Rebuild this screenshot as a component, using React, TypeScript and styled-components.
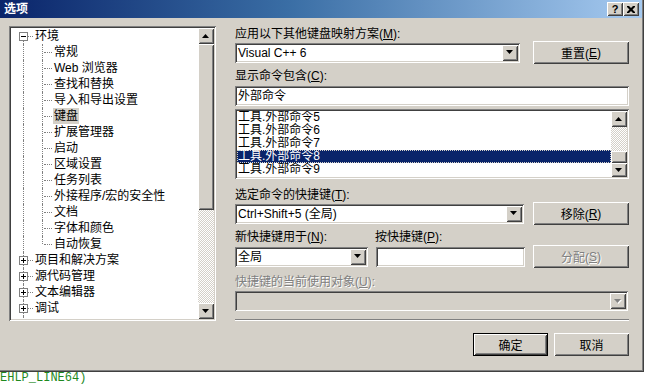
import React from 'react';
import styled, { createGlobalStyle, css } from 'styled-components';

const FACE = '#d4d0c8';
const FONT = `Tahoma, "Liberation Sans", "Noto Sans CJK SC", sans-serif`;

const Global = createGlobalStyle`
  html, body { margin: 0; padding: 0; background: #fff; }
  body { font-family: ${FONT}; font-size: 12px; color: #000; }
`;

const sunken = css`
  box-shadow: inset 1px 1px #808080, inset -1px -1px #fff, inset 2px 2px #404040,
    inset -2px -2px ${FACE};
`;
const raised = css`
  box-shadow: inset 1px 1px #fff, inset -1px -1px #404040, inset 2px 2px ${FACE},
    inset -2px -2px #808080;
`;

const Window = styled.div`
  width: 644px;
  height: 372px;
  box-sizing: border-box;
  padding: 0 2px 2px 0;
  background: ${FACE};
  box-shadow: inset -1px -1px #404040, inset -2px -2px #808080;
  display: flex;
  flex-direction: column;
`;

const TitleBar = styled.div`
  height: 18px;
  flex: none;
  display: flex;
  align-items: center;
  background: linear-gradient(to right, #0a246a 0%, #3a6ea5 45%, #a6caf0 100%);
  padding: 0 3px 0 4px;
`;

const Title = styled.div`
  flex: 1;
  color: #fff;
  font-weight: bold;
  font-size: 12px;
  line-height: 18px;
`;

const CapButton = styled.div`
  width: 16px;
  height: 14px;
  background: ${FACE};
  ${raised};
  display: flex;
  align-items: center;
  justify-content: center;
  font-family: Tahoma, "Liberation Sans", sans-serif;
  font-weight: bold;
  font-size: 11px;
  line-height: 14px;
`;

const Body = styled.div`
  flex: 1;
  display: flex;
  align-items: flex-start;
  padding: 8px 0 0 9px;
`;

/* ---------- tree ---------- */
const TreeBox = styled.div`
  width: 207px;
  height: 295px;
  box-sizing: border-box;
  padding: 2px;
  background: #fff;
  ${sunken};
  display: flex;
  flex: none;
`;

const TreeList = styled.div`
  flex: 1;
  overflow: hidden;
  padding-left: 4px;
`;

const TreeRow = styled.div`
  display: flex;
  height: 16px;
  align-items: center;
`;

type Kind = 'pipe' | 'tee' | 'ell' | 'first';

const Cell = styled.span<{ $kind: Kind }>`
  position: relative;
  flex: none;
  width: 19px;
  height: 16px;
  &::before {
    content: '';
    position: absolute;
    left: 8px;
    border-left: 1px dotted #808080;
    top: ${(p) => (p.$kind === 'first' ? '8px' : '0')};
    bottom: ${(p) => (p.$kind === 'ell' ? '8px' : '0')};
  }
  &::after {
    content: '';
    position: absolute;
    display: ${(p) => (p.$kind === 'pipe' ? 'none' : 'block')};
    top: 8px;
    left: 10px;
    width: 8px;
    border-top: 1px dotted #808080;
  }
`;

const Expander = styled.span`
  position: absolute;
  z-index: 1;
  left: 4px;
  top: 4px;
  width: 9px;
  height: 9px;
  box-sizing: border-box;
  border: 1px solid #808080;
  background: #fff;
`;

const Sign = styled.span<{ $plus?: boolean }>`
  position: absolute;
  left: 1px;
  top: 3px;
  width: 5px;
  height: 1px;
  background: #000;
  &::after {
    content: '';
    display: ${(p) => (p.$plus ? 'block' : 'none')};
    position: absolute;
    left: 2px;
    top: -2px;
    width: 1px;
    height: 5px;
    background: #000;
  }
`;

const TreeLabel = styled.span<{ $sel?: boolean }>`
  padding: 0 1px;
  height: 16px;
  line-height: 16px;
  white-space: nowrap;
  background: ${(p) => (p.$sel ? FACE : 'transparent')};
`;

/* ---------- scrollbar ---------- */
const VScroll = styled.div`
  width: 16px;
  flex: none;
  display: flex;
  flex-direction: column;
`;

const ScrollBtn = styled.div<{ $h?: number }>`
  height: ${(p) => p.$h ?? 16}px;
  flex: none;
  background: ${FACE};
  ${raised};
  display: flex;
  align-items: center;
  justify-content: center;
`;

const Track = styled.div`
  flex: 1;
  background-color: #fff;
  background-image: repeating-conic-gradient(${FACE} 0 25%, #fff 0 50%);
  background-size: 2px 2px;
`;

/* ---------- right panel ---------- */
const Right = styled.div`
  margin-left: 19px;
  width: 394px;
  display: flex;
  flex-direction: column;
`;

const Label = styled.div<{ $mt: number; $disabled?: boolean }>`
  margin-top: ${(p) => p.$mt}px;
  height: 14px;
  line-height: 14px;
  white-space: nowrap;
  color: ${(p) => (p.$disabled ? '#808080' : '#000')};
  text-shadow: ${(p) => (p.$disabled ? '1px 1px #fff' : 'none')};
`;

const Mn = styled.span`
  text-decoration: underline;
`;

const Row = styled.div<{ $mt: number }>`
  margin-top: ${(p) => p.$mt}px;
  height: 23px;
  display: flex;
  align-items: center;
  justify-content: space-between;
`;

const LabelRow = styled.div<{ $mt: number }>`
  margin-top: ${(p) => p.$mt}px;
  display: flex;
`;

const Field = styled.div<{ $w: number; $disabled?: boolean }>`
  width: ${(p) => p.$w}px;
  height: 20px;
  flex: none;
  box-sizing: border-box;
  padding: 2px;
  background: ${(p) => (p.$disabled ? FACE : '#fff')};
  ${sunken};
  display: flex;
`;

const FieldText = styled.span`
  flex: 1;
  padding-left: 1px;
  line-height: 16px;
  white-space: nowrap;
  overflow: hidden;
`;

const DropBtn = styled.span`
  width: 16px;
  flex: none;
  background: ${FACE};
  ${raised};
  display: flex;
  align-items: center;
  justify-content: center;
`;

const Button = styled.div<{ $w: number; $default?: boolean; $disabled?: boolean }>`
  width: ${(p) => p.$w}px;
  height: 23px;
  flex: none;
  box-sizing: border-box;
  background: ${FACE};
  ${raised};
  border: ${(p) => (p.$default ? '1px solid #000' : 'none')};
  display: flex;
  align-items: center;
  justify-content: center;
  white-space: nowrap;
  color: ${(p) => (p.$disabled ? '#808080' : '#000')};
  text-shadow: ${(p) => (p.$disabled ? '1px 1px #fff' : 'none')};
`;

const ListBox = styled.div`
  margin-top: 3px;
  height: 70px;
  box-sizing: border-box;
  padding: 2px;
  background: #fff;
  ${sunken};
  display: flex;
`;

const ListItems = styled.div`
  flex: 1;
  overflow: hidden;
`;

const ListItem = styled.div<{ $sel?: boolean }>`
  height: 13px;
  line-height: 13px;
  box-sizing: border-box;
  padding-left: 1px;
  white-space: nowrap;
  background: ${(p) => (p.$sel ? '#0a246a' : 'transparent')};
  color: ${(p) => (p.$sel ? '#fff' : '#000')};
  outline: ${(p) => (p.$sel ? '1px dotted #d4d0c8' : 'none')};
  outline-offset: -1px;
`;

const Separator = styled.div`
  margin-top: 8px;
  height: 2px;
  border-top: 1px solid #808080;
  border-bottom: 1px solid #fff;
  box-sizing: border-box;
`;

const ButtonBar = styled.div`
  margin-top: 12px;
  display: flex;
  justify-content: flex-end;
  gap: 6px;
`;

const Footer = styled.div`
  height: 13px;
  font-family: "Liberation Mono", "DejaVu Sans Mono", monospace;
  font-size: 12px;
  line-height: 13px;
  color: #1f8a1f;
  white-space: pre;
`;

const Arrow = ({ dir = 'down', disabled }: { dir?: 'up' | 'down'; disabled?: boolean }) => (
  <svg width="8" height="5" viewBox="0 0 8 5">
    {disabled && <polygon points="1,1 8,1 4.5,5" fill="#fff" />}
    <polygon
      points={dir === 'down' ? '0,0 7,0 3.5,4' : '0,4 7,4 3.5,0'}
      fill={disabled ? '#808080' : '#000'}
    />
  </svg>
);

const CloseGlyph = () => (
  <svg width="8" height="7" viewBox="0 0 8 7">
    <path d="M0 0h2l2 2 2-2h2v1l-2.5 2.5L8 6v1H6L4 5 2 7H0V6l2.5-2.5L0 1z" fill="#000" />
  </svg>
);

interface Node {
  label: string;
  cells: Kind[];
  exp?: 'plus' | 'minus';
  sel?: boolean;
}

const kids = ['常规', 'Web 浏览器', '查找和替换', '导入和导出设置', '键盘', '扩展管理器', '启动', '区域设置', '任务列表', '外接程序/宏的安全性', '文档', '字体和颜色', '自动恢复'];

const rows: Node[] = [
  { label: '环境', cells: ['first'], exp: 'minus' },
  ...kids.map((k, i) => ({
    label: k,
    cells: ['pipe', i === kids.length - 1 ? 'ell' : 'tee'] as Kind[],
    sel: k === '键盘',
  })),
  { label: '项目和解决方案', cells: ['tee'], exp: 'plus' },
  { label: '源代码管理', cells: ['tee'], exp: 'plus' },
  { label: '文本编辑器', cells: ['tee'], exp: 'plus' },
  { label: '调试', cells: ['tee'], exp: 'plus' },
  { label: '', cells: ['pipe'] },
];

const commands = ['工具.外部命令5', '工具.外部命令6', '工具.外部命令7', '工具.外部命令8', '工具.外部命令9'];

export default function App() {
  return (
    <>
      <Global />
      <Window>
        <TitleBar>
          <Title>选项</Title>
          <CapButton>?</CapButton>
          <CapButton>
            <CloseGlyph />
          </CapButton>
        </TitleBar>
        <Body>
          <TreeBox>
            <TreeList>
              {rows.map((r, idx) => (
                <TreeRow key={idx}>
                  {r.cells.map((c, i) => (
                    <Cell key={i} $kind={c}>
                      {r.exp && i === r.cells.length - 1 && (
                        <Expander>
                          <Sign $plus={r.exp === 'plus'} />
                        </Expander>
                      )}
                    </Cell>
                  ))}
                  {r.label && <TreeLabel $sel={r.sel}>{r.label}</TreeLabel>}
                </TreeRow>
              ))}
            </TreeList>
            <VScroll>
              <ScrollBtn>
                <Arrow dir="up" />
              </ScrollBtn>
              <ScrollBtn $h={166} />
              <Track />
              <ScrollBtn>
                <Arrow />
              </ScrollBtn>
            </VScroll>
          </TreeBox>

          <Right>
            <Label $mt={1}>
              应用以下其他键盘映射方案(<Mn>M</Mn>):
            </Label>
            <Row $mt={0}>
              <Field $w={285}>
                <FieldText>Visual C++ 6</FieldText>
                <DropBtn>
                  <Arrow />
                </DropBtn>
              </Field>
              <Button $w={96}>
                重置(<Mn>E</Mn>)
              </Button>
            </Row>
            <Label $mt={5}>
              显示命令包含(<Mn>C</Mn>):
            </Label>
            <Field $w={394} style={{ marginTop: 3 }}>
              <FieldText>外部命令</FieldText>
            </Field>
            <ListBox>
              <ListItems>
                {commands.map((c) => (
                  <ListItem key={c} $sel={c.endsWith('8')}>
                    {c}
                  </ListItem>
                ))}
              </ListItems>
              <VScroll>
                <ScrollBtn>
                  <Arrow dir="up" />
                </ScrollBtn>
                <Track />
                <ScrollBtn $h={12} />
                <ScrollBtn $h={14}>
                  <Arrow />
                </ScrollBtn>
              </VScroll>
            </ListBox>
            <Label $mt={9}>
              选定命令的快捷键(<Mn>T</Mn>):
            </Label>
            <Row $mt={0}>
              <Field $w={289}>
                <FieldText>Ctrl+Shift+5 (全局)</FieldText>
                <DropBtn>
                  <Arrow />
                </DropBtn>
              </Field>
              <Button $w={96}>
                移除(<Mn>R</Mn>)
              </Button>
            </Row>
            <LabelRow $mt={5}>
              <Label $mt={0} style={{ width: 140 }}>
                新快捷键用于(<Mn>N</Mn>):
              </Label>
              <Label $mt={0}>
                按快捷键(<Mn>P</Mn>):
              </Label>
            </LabelRow>
            <Row $mt={1}>
              <Field $w={133}>
                <FieldText>全局</FieldText>
                <DropBtn>
                  <Arrow />
                </DropBtn>
              </Field>
              <Field $w={149}>
                <FieldText />
              </Field>
              <Button $w={96} $disabled>
                分配(<Mn>S</Mn>)
              </Button>
            </Row>
            <Label $mt={7} $disabled>
              快捷键的当前使用对象(<Mn>U</Mn>):
            </Label>
            <Field $w={393} $disabled style={{ marginTop: 2 }}>
              <FieldText />
              <DropBtn>
                <Arrow disabled />
              </DropBtn>
            </Field>
            <Separator />
            <ButtonBar>
              <Button $w={75} $default>
                确定
              </Button>
              <Button $w={75}>取消</Button>
            </ButtonBar>
          </Right>
        </Body>
      </Window>
      <Footer>EHLP_LINE64)</Footer>
    </>
  );
}
